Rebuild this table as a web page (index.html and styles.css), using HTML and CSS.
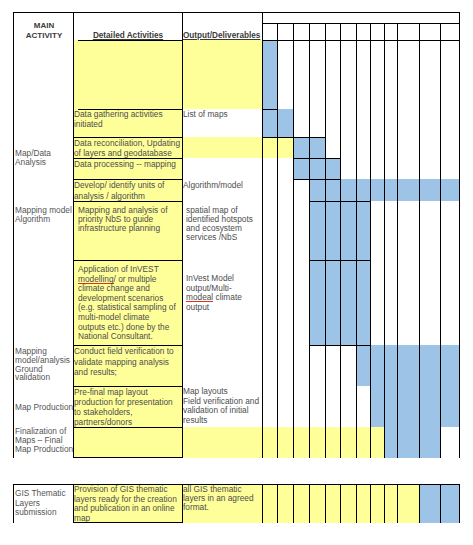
FILE: index.html
```html
<!DOCTYPE html>
<html>
<head>
	<meta charset="UTF-8">
	<title>GIS work plan</title>
	<link rel="stylesheet" href="styles.css">
</head>
<body>
	<div class="sheet">
		<div class="grid plan">
			<!-- header -->
			<div class="main head-main">MAIN<br>ACTIVITY</div>
			<div class="act head-col">Detailed Activities</div>
			<div class="out head-col head-out">Output/Deliverables</div>
			<div class="g head-time"></div>
			<div class="g t"></div><div class="g t"></div><div class="g t"></div><div class="g t"></div>
			<div class="g t"></div><div class="g t"></div><div class="g t"></div><div class="g t"></div>
			<div class="g t"></div><div class="g t"></div><div class="g t"></div><div class="g t"></div>

			<!-- preparation -->
			<div class="main"></div>
			<div class="act cut"></div>
			<div class="out y"></div>
			<div class="g t b"></div><div class="g t"></div><div class="g t"></div><div class="g t"></div>
			<div class="g t"></div><div class="g t"></div><div class="g t"></div><div class="g t"></div>
			<div class="g t"></div><div class="g t"></div><div class="g t"></div><div class="g t"></div>

			<!-- data gathering -->
			<div class="main"></div>
			<div class="act cut">Data gathering activities<br>initiated</div>
			<div class="out">List of maps</div>
			<div class="g t b"></div><div class="g b"></div><div class="g"></div><div class="g"></div>
			<div class="g"></div><div class="g"></div><div class="g"></div><div class="g"></div>
			<div class="g"></div><div class="g"></div><div class="g"></div><div class="g"></div>

			<!-- map / data analysis -->
			<div class="main span2 lh85 pt12">Map/Data<br>Analysis</div>
			<div class="act t">Data reconciliation, Updating<br>of layers and geodatabase</div>
			<div class="out y"></div>
			<div class="g t y"></div><div class="g t y"></div><div class="g t b"></div><div class="g t b"></div>
			<div class="g"></div><div class="g"></div><div class="g"></div><div class="g"></div>
			<div class="g"></div><div class="g"></div><div class="g"></div><div class="g"></div>

			<div class="act t">Data processing -- mapping</div>
			<div class="out"></div>
			<div class="g"></div><div class="g"></div><div class="g t b"></div><div class="g t b"></div>
			<div class="g t b"></div><div class="g"></div><div class="g"></div><div class="g"></div>
			<div class="g"></div><div class="g"></div><div class="g"></div><div class="g"></div>

			<!-- units of analysis -->
			<div class="main"></div>
			<div class="act t lh105">Develop/ identify units of<br>analysis / algorithm</div>
			<div class="out pt1">Algorithm/model</div>
			<div class="g"></div><div class="g"></div><div class="g t"></div><div class="g t b"></div>
			<div class="g t b"></div><div class="g b"></div><div class="g b"></div><div class="g b"></div>
			<div class="g b"></div><div class="g b"></div><div class="g b"></div><div class="g b"></div>

			<!-- mapping model -->
			<div class="main lh9 pt5">Mapping model<br>Algorithm</div>
			<div class="act t indent lh9 pt4">Mapping and analysis of<br>priority NbS to guide<br>infrastructure planning</div>
			<div class="out indent lh9 pt5">spatial map of<br>identified hotspots<br>and ecosystem<br>services /NbS</div>
			<div class="g"></div><div class="g"></div><div class="g"></div><div class="g t b"></div>
			<div class="g t b"></div><div class="g t b"></div><div class="g t b"></div><div class="g"></div>
			<div class="g"></div><div class="g"></div><div class="g"></div><div class="g"></div>

			<div class="main"></div>
			<div class="act t indent lh96 pt4">Application of InVEST<br><span class="typo">modelling</span>/ or multiple<br>climate change and<br>development scenarios<br>(e.g. statistical sampling of<br>multi-model climate<br>outputs etc.) done by the<br>National Consultant.</div>
			<div class="out indent lh95 pt14">InVest Model<br>output/Multi-<br><span class="typo">modeal</span> climate<br>output</div>
			<div class="g"></div><div class="g"></div><div class="g"></div><div class="g t b"></div>
			<div class="g t b"></div><div class="g t b"></div><div class="g t b"></div><div class="g"></div>
			<div class="g"></div><div class="g"></div><div class="g"></div><div class="g"></div>

			<!-- ground validation -->
			<div class="main lh88 pt2">Mapping<br>model/analysis<br>Ground<br>validation</div>
			<div class="act t lh105">Conduct field verification to<br>validate mapping analysis<br>and results;</div>
			<div class="out"></div>
			<div class="g"></div><div class="g"></div><div class="g"></div><div class="g t"></div>
			<div class="g t"></div><div class="g t"></div><div class="g t b"></div><div class="g b"></div>
			<div class="g b"></div><div class="g b"></div><div class="g b"></div><div class="g b"></div>

			<!-- map production -->
			<div class="main pt16">Map Production</div>
			<div class="act t">Pre-final map layout<br>production for presentation<br>to stakeholders,<br>partners/donors</div>
			<div class="out lh95 pt1">Map layouts<br>Field verification and<br>validation of initial<br>results</div>
			<div class="g"></div><div class="g"></div><div class="g"></div><div class="g"></div>
			<div class="g"></div><div class="g"></div><div class="g"></div><div class="g b"></div>
			<div class="g b"></div><div class="g b"></div><div class="g b"></div><div class="g b"></div>

			<div class="main lh92">Finalization of<br>Maps &ndash; Final<br>Map Production</div>
			<div class="act t end"></div>
			<div class="out y"></div>
			<div class="g y"></div><div class="g y"></div><div class="g y"></div><div class="g y"></div>
			<div class="g y"></div><div class="g y"></div><div class="g y"></div><div class="g y"></div>
			<div class="g b"></div><div class="g b"></div><div class="g b"></div><div class="g"></div>
		</div>

		<div class="grid extra">
			<div class="main lh95 pt4">GIS Thematic<br>Layers<br>submission</div>
			<div class="act end lh96">Provision of GIS thematic<br>layers ready for the creation<br>and publication in an online<br>map</div>
			<div class="out y lh92">all GIS thematic<br>layers in an agreed<br>format.</div>
			<div class="g y"></div><div class="g y"></div><div class="g y"></div><div class="g y"></div>
			<div class="g y"></div><div class="g y"></div><div class="g y"></div><div class="g y"></div>
			<div class="g y"></div><div class="g y"></div><div class="g b"></div><div class="g b"></div>
		</div>
	</div>
</body>
</html>
```

FILE: styles.css
```css
body {
	margin: 0;
	background: #fff;
	font-family: "Liberation Sans", Arial, sans-serif;
	font-size: 8.3px;
	color: #4d4d4d;
}

.sheet {
	padding: 12px 0 0 13px;
}

.grid {
	display: grid;
	grid-template-columns: 59px 109px 80px 15px 16px 16px 16px 15px 16px 14px 14px 13px 22px 21px 19px;
	width: 445px;
	border: 1px solid #000;
	border-bottom: 0;
}
.plan {
	grid-template-rows: 10px 17px 69px 28px 21px 21px 22px 59px 85px 41px 41px 31px;
}
.extra {
	grid-template-rows: 38px;
	margin-top: 26px;
}

.grid > div {
	box-sizing: border-box;
	white-space: nowrap;
	overflow: hidden;
	line-height: 10px;
}

/* columns */
.main {
	padding-left: 1px;
	color: #555;
}
.act {
	border-left: 1px solid #000;
	background-color: #ffff99;
}
.out {
	border-left: 1px solid #000;
}
.g {
	border-left: 1px solid #000;
}

/* header */
.head-main {
	grid-row: span 2;
	text-align: center;
	font-weight: bold;
	font-size: 8px;
	padding-top: 8px;
	color: #3a3a3a;
}
.head-col {
	grid-row: span 2;
	padding-top: 18px;
	font-weight: bold;
	font-size: 8.2px;
	color: #3a3a3a;
	text-decoration: underline;
}
.act.head-col {
	text-align: center;
	background-color: #fff;
}
.head-time {
	grid-column: span 12;
}

/* fills and lines */
.y { background-color: #ffff99; }
.b { background-color: #9dc3e6; }
.t { border-top: 1px solid #000; }
.end { border-bottom: 1px solid #000; }
.cut {
	background: linear-gradient(#000, #000) 4px 0 / calc(100% - 4px) 1px no-repeat, #ffff99;
}

.span2 { grid-row: span 2; }
.indent { padding-left: 4px; }
.out.indent { padding-left: 3px; }

/* spell check mark */
.typo {
	background: linear-gradient(#e0301e, #e0301e) 0 100% / 100% 1px no-repeat;
}

/* per cell text placement */
.lh85 { line-height: 8.5px !important; }
.lh88 { line-height: 8.8px !important; }
.lh9 { line-height: 9px !important; }
.lh92 { line-height: 9.2px !important; }
.lh95 { line-height: 9.5px !important; }
.lh96 { line-height: 9.6px !important; }
.lh105 { line-height: 10.5px !important; }
.pt1 { padding-top: 1px; }
.pt2 { padding-top: 2px; }
.pt4 { padding-top: 4px; }
.pt5 { padding-top: 5px; }
.pt12 { padding-top: 12px; }
.pt14 { padding-top: 14px; }
.pt16 { padding-top: 16px; }
```
